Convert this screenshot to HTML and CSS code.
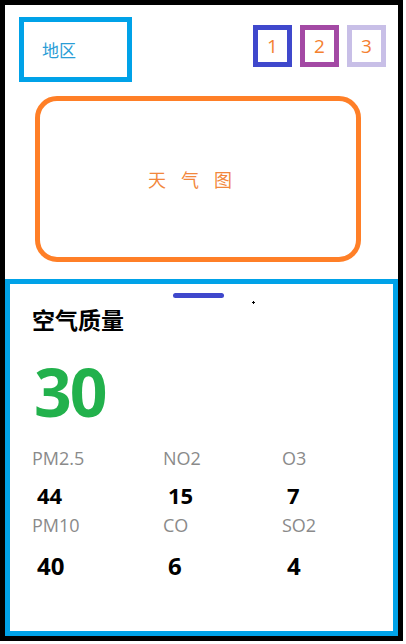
FILE: index.html
```html
<!DOCTYPE html>
<html lang="zh">
<head>
<meta charset="utf-8">
<link rel="stylesheet" href="styles.css">
</head>
<body>
<div class="frame">
  <section class="top">
    <div class="header">
      <div class="region">地区</div>
      <div class="tabs">
        <div class="tab tab-1">1</div>
        <div class="tab tab-2">2</div>
        <div class="tab tab-3">3</div>
      </div>
    </div>
    <div class="chart"><span>天</span><span>气</span><span>图</span></div>
  </section>
  <section class="aqi">
    <div class="handle"></div>
    <span class="cursor"></span>
    <h2 class="title">空气质量</h2>
    <div class="big">30</div>
    <div class="grid">
      <div class="label">PM2.5</div><div class="label">NO2</div><div class="label">O3</div>
      <div class="value">44</div><div class="value">15</div><div class="value">7</div>
      <div class="label">PM10</div><div class="label">CO</div><div class="label">SO2</div>
      <div class="value v2">40</div><div class="value v2">6</div><div class="value v2">4</div>
    </div>
  </section>
</div>
</body>
</html>
```
FILE: styles.css
```css
* { box-sizing: border-box; }
html, body { margin: 0; padding: 0; background: #fff; }
body { font-family: "Open Sans", "Noto Sans CJK SC", sans-serif; }
.frame {
  width: 403px;
  height: 641px;
  border: 5px solid #000;
  display: flex;
  flex-direction: column;
}
.top {
  height: 274px;
  padding: 12px 12px 0 14px;
}
.header {
  display: flex;
  justify-content: space-between;
  align-items: flex-start;
}
.region {
  width: 113px;
  height: 65px;
  border: 5px solid #00a2e8;
  display: flex;
  align-items: center;
  padding-left: 18px;
  font-family: "Noto Sans CJK SC", sans-serif;
  font-size: 17px;
  color: #2a9dd6;
}
.tabs {
  display: flex;
  gap: 8px;
  margin-top: 8px;
}
.tab {
  width: 39px;
  height: 42px;
  border: 5px solid;
  display: flex;
  align-items: center;
  justify-content: center;
  font-size: 19px;
  color: #f4802f;
}
.tab-1 { border-color: #3f48cc; }
.tab-2 { border-color: #a349a4; }
.tab-3 { border-color: #c8bfe7; }
.chart {
  margin: 14px 0 0 16px;
  width: 326px;
  height: 166px;
  border: 5px solid #ff7f27;
  border-radius: 22px;
  display: flex;
  align-items: center;
  justify-content: center;
  gap: 15px;
  padding-right: 16px;
  font-family: "Noto Sans CJK SC", sans-serif;
  font-size: 18px;
  color: #f2873c;
}
.aqi {
  flex: 1;
  border: 5px solid #00a2e8;
  padding: 9px 0 0 22px;
  position: relative;
}
.handle {
  width: 51px;
  height: 5px;
  border-radius: 3px;
  background: #3f48cc;
  margin-left: 141px;
}
.cursor {
  position: absolute;
  left: 242px;
  top: 17px;
  width: 3px;
  height: 3px;
  background:
    linear-gradient(#000, #000) center/3px 1px no-repeat,
    linear-gradient(#000, #000) center/1px 3px no-repeat;
}
.title {
  margin: 5px 0 0 0;
  font-family: "Noto Sans CJK SC", sans-serif;
  font-size: 23px;
  font-weight: 700;
  line-height: 32px;
  color: #000;
}
.big {
  margin: 21px 0 0 2px;
  font-size: 66px;
  font-weight: 700;
  line-height: 70px;
  color: #22b14c;
  letter-spacing: -2px;
}
.grid {
  margin-top: 20px;
  display: grid;
  grid-template-columns: 131px 119px 1fr;
}
.label {
  font-size: 18px;
  line-height: 24px;
  color: #8a8a8a;
}
.value {
  padding: 7px 0 0 5px;
  font-size: 22px;
  font-weight: 700;
  line-height: 36px;
  color: #000;
}
.value.v2 { padding-top: 5px; font-size: 24px; line-height: 48px; }
```
